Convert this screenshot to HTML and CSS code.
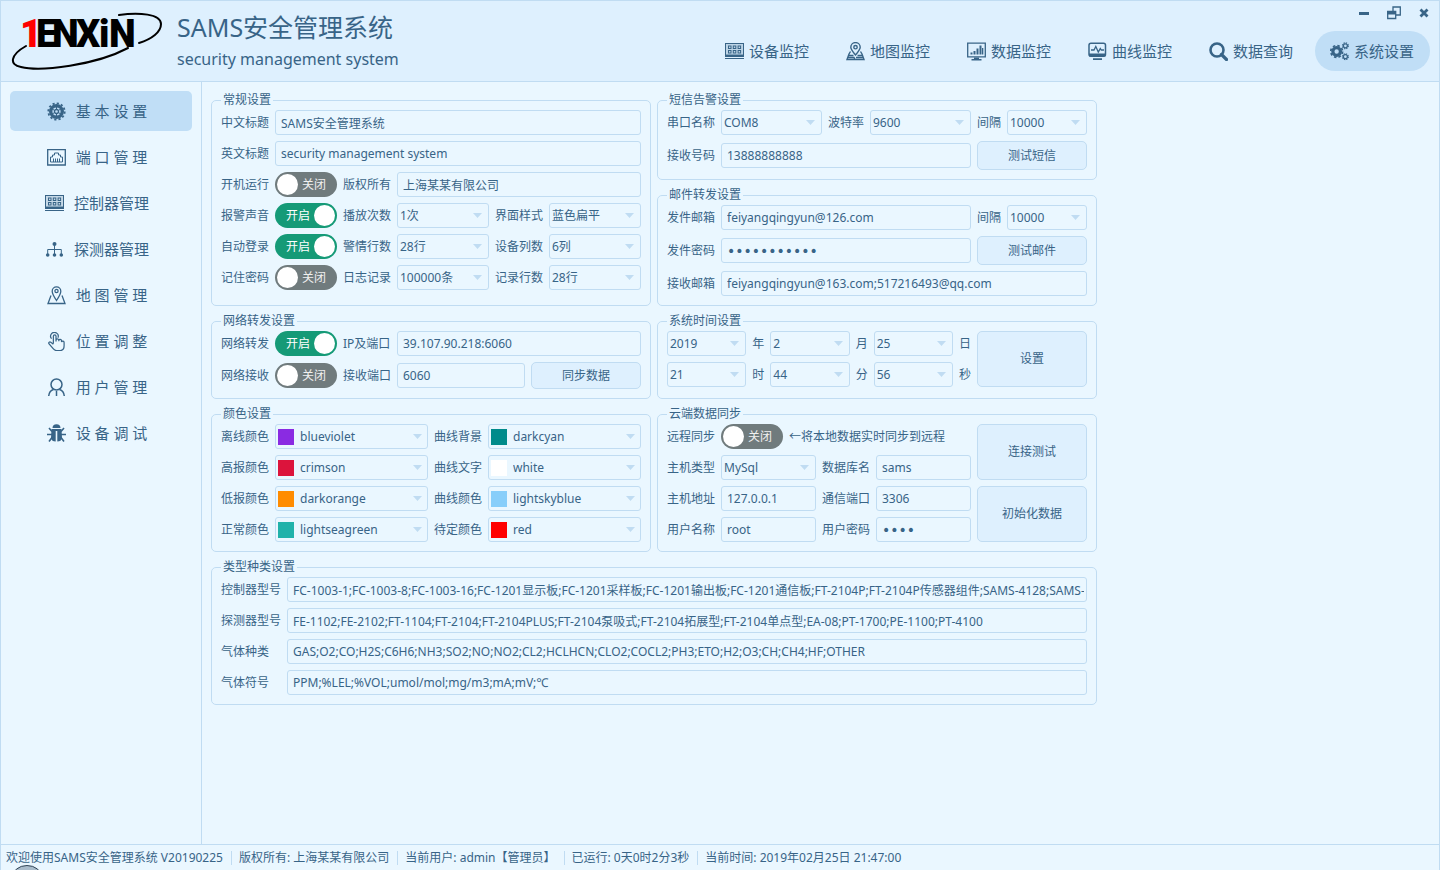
FILE: index.html
```html
<!DOCTYPE html>
<html lang="zh-CN">
<head>
<meta charset="utf-8">
<title>SAMS安全管理系统</title>
<link rel="stylesheet" href="styles.css">
</head>
<body>
<svg class="sprite" aria-hidden="true">
  <symbol id="i-panel" viewBox="0 0 19 17">
    <path fill-rule="evenodd" d="M0 0h19v14H0zM1 1v10.500h17V1zM3 2.500h3.500v3.500H3zM7.800 2.500h3.500v3.500H7.800zM12.600 2.500h3.500v3.500h-3.500zM3 7h3.500v3.500H3zM7.800 7h3.500v3.500H7.800zM12.600 7h3.500v3.500h-3.500zM4 3.500v1.500h1.500V3.500zM8.800 3.500v1.500h1.500V3.500zM13.600 3.500v1.500h1.500V3.500zM4 8v1.500h1.500V8zM8.800 8v1.500h1.500V8zM13.600 8v1.500h1.500V8z"/>
    <path opacity=".2" d="M1 1h17v10.500H1z"/><path d="M0 15h19v1H0z"/>
  </symbol>
  <symbol id="i-mapfold" viewBox="0 0 19 19">
    <g fill="none" stroke="currentColor" stroke-width="1.400"><path d="M9.500 13C6 9 4.800 7.500 4.800 5.300a4.700 4.700 0 0 1 9.400 0c0 2.200-1.200 3.700-4.700 7.700z"/><circle cx="9.500" cy="5.200" r="1.700"/><path d="M4.500 9.500L3 12l-2 5.500h17L16 12l-1.500-2.500M3 13.500h4.500M11.500 13.500H16M2 15.500h6l1 2M10 15.500h7"/></g>
  </symbol>
  <symbol id="i-bars" viewBox="0 0 19 18">
    <path fill="none" stroke="currentColor" stroke-width="1.300" d="M.7.7h17.600v13.600H.7z"/><path d="M3.500 10h2v2h-2zM6.500 8.500h2V12h-2zM9.500 6h2v6h-2zM12.500 3h2v9h-2zM15 5.500h1.300V12H15zM7 15h5v1.500h2.500V18h-10v-1.500H7z"/>
  </symbol>
  <symbol id="i-pulse" viewBox="0 0 19 18">
    <rect x="1" y=".8" width="16.500" height="13" rx="2" fill="none" stroke="currentColor" stroke-width="1.500"/><path d="M1 11h16.500v3H1zM5 15.800h9v1.600H5z"/><path fill="none" stroke="currentColor" stroke-width="1.300" d="M3 7.500h3L7.800 4l2.500 5.500 2-3.500 1 1.500H16"/>
  </symbol>
  <symbol id="i-search" viewBox="0 0 19 19">
    <circle cx="8" cy="8" r="6.500" fill="none" stroke="currentColor" stroke-width="2.600"/><path d="M12.500 12.500l5 5" stroke="currentColor" stroke-width="3.200" stroke-linecap="round"/>
  </symbol>
  <symbol id="i-gears" viewBox="0 0 20 20">
    <circle cx="7" cy="10" r="4" fill="none" stroke="currentColor" stroke-width="3.400"/><circle cx="7" cy="10" r="6.200" fill="none" stroke="currentColor" stroke-width="1.800" stroke-dasharray="2.600 2.270"/>
    <g fill="none" stroke="currentColor"><circle cx="16.200" cy="4" r="2.100" stroke-width="1.300"/><circle cx="16.200" cy="4" r="3.100" stroke-width="1.200" stroke-dasharray="1.400 1.040"/><circle cx="16.200" cy="15.500" r="2.100" stroke-width="1.300"/><circle cx="16.200" cy="15.500" r="3.100" stroke-width="1.200" stroke-dasharray="1.400 1.040"/></g>
  </symbol>
  <symbol id="i-gear" viewBox="0 0 19 19">
    <g fill="none" stroke="currentColor"><circle cx="9.500" cy="9.500" r="5.800" stroke-width="3.400"/><circle cx="9.500" cy="9.500" r="8.200" stroke-width="1.800" stroke-dasharray="2.200 2.090"/><circle cx="9.500" cy="9.500" r="2" stroke-width="1.300"/><path stroke-width="1" d="M9.500 4v3M9.500 12v3M4.700 6.700l2.700 1.600M11.600 10.700l2.700 1.600M4.700 12.300l2.700-1.600M11.600 8.300l2.700-1.600"/></g>
  </symbol>
  <symbol id="i-port" viewBox="0 0 19 17">
    <g fill="none" stroke="currentColor"><path stroke-width="1.300" d="M.7.7h17.600v15.300H.7z"/><path d="M3.500 13V8h2V6h2V4h4v2h2v2h2v5zM6.500 13V9.500M8.500 13V9.500M10.500 13V9.500M12.500 13V9.500"/></g>
  </symbol>
  <symbol id="i-tree" viewBox="0 0 19 17">
    <circle cx="9.500" cy="3" r="2"/><path fill="none" stroke="currentColor" d="M9.500 4v9M2.700 13V8.500h13.600V13"/><circle cx="2.700" cy="14" r="1.800"/><circle cx="9.500" cy="14" r="1.800"/><circle cx="16.300" cy="14" r="1.800"/>
  </symbol>
  <symbol id="i-map" viewBox="0 0 19 19">
    <g fill="none" stroke="currentColor" stroke-width="1.300"><path d="M9.500 14.500C6.500 10 5.200 7.500 5.200 5.200a4.300 4.300 0 0 1 8.600 0c0 2.300-1.300 4.800-4.300 9.300z"/><circle cx="9.500" cy="5" r="1.600"/><path d="M4 9.500L1 17.500h17l-3-8"/></g>
  </symbol>
  <symbol id="i-hand" viewBox="0 0 19 20">
    <g fill="none" stroke="currentColor" stroke-width="1.300"><path d="M6.200 12V4.500a1.400 1.400 0 0 1 2.800 0V10 8.300a1.500 1.500 0 0 1 2.900 0v1.500-1a1.500 1.500 0 0 1 2.900.3v1.400a1.400 1.400 0 0 1 2.700.5v3.500c0 3-1.500 5-4 5H9.500c-1.500 0-2.500-.8-3.500-2L1.500 12.300c-.6-1.500.8-2.300 2-1.500l2.700 2"/><path d="M4.300 7A4 4 0 1 1 11 6"/></g>
  </symbol>
  <symbol id="i-user" viewBox="0 0 19 19">
    <g fill="none" stroke="currentColor" stroke-width="1.500"><circle cx="9.500" cy="6.500" r="5.500"/><path d="M6.500 11.500C3.500 12.500 2 15 1.700 18M12.500 11.500c3 1 4.500 3.500 4.800 6.500M9.500 18v-5"/></g>
  </symbol>
  <symbol id="i-bug" viewBox="0 0 19 19">
    <path d="M5.500 4a4 3.800 0 0 1 8 0zM4.500 5h10l.5 9c-.5 2.500-2 3.500-4.700 3.500V7H8.700v10.500C6 17.500 4.500 16.500 4 14z"/><path fill="none" stroke="currentColor" stroke-width="1.600" d="M5 7.500L2 4M14 7.500L17 4M5 10.500H0M14 10.500h5M5 13.500L2 17.500M14 13.500l3 4"/>
  </symbol>
</svg>

<div class="window">
  <header class="header">
    <svg class="logo" viewBox="0 0 156 64" role="img" aria-label="1ENXiN">
      <g fill="none" stroke="#000" stroke-linecap="round">
        <path stroke-width="2" d="M112 9C132 6 154 8 154 18c0 8-9 15-22 19"/>
        <path stroke-width="2" d="M19 40C3 49 2 59 14 61c20 5 75-2 107-19"/>
      </g>
      <text x="13 29 45 69 92 102" y="41"><tspan class="logo-red">1</tspan>ENXiN</text>
    </svg>
    <div class="titles">
      <h1>SAMS安全管理系统</h1>
      <p>security management system</p>
    </div>
    <div class="header-right">
      <div class="winbtns">
        <button type="button" aria-label="最小化"><svg viewBox="0 0 14 14"><path d="M2 6h10v3H2z"/></svg></button>
        <button type="button" aria-label="还原"><svg viewBox="0 0 14 14"><path fill="none" stroke="currentColor" stroke-width="1.300" d="M6 5V1h7.300v8H9M.7 5.500h8v7h-8z"/><path d="M0 5h9v3.500H0z"/></svg></button>
        <button type="button" aria-label="关闭"><svg viewBox="0 0 14 14"><path fill="none" stroke="currentColor" stroke-width="2.800" d="M3.500 3.500l7 7M10.500 3.500l-7 7"/></svg></button>
      </div>
      <nav class="topnav">
        <button type="button"><svg><use href="#i-panel"/></svg>设备监控</button>
        <button type="button"><svg><use href="#i-mapfold"/></svg>地图监控</button>
        <button type="button"><svg><use href="#i-bars"/></svg>数据监控</button>
        <button type="button"><svg><use href="#i-pulse"/></svg>曲线监控</button>
        <button type="button"><svg><use href="#i-search"/></svg>数据查询</button>
        <button type="button" class="active"><svg><use href="#i-gears"/></svg>系统设置</button>
      </nav>
    </div>
  </header>

  <div class="body">
    <nav class="sidebar">
      <button type="button" class="active"><svg><use href="#i-gear"/></svg>基 本 设 置</button>
      <button type="button"><svg><use href="#i-port"/></svg>端 口 管 理</button>
      <button type="button"><svg><use href="#i-panel"/></svg>控制器管理</button>
      <button type="button"><svg><use href="#i-tree"/></svg>探测器管理</button>
      <button type="button"><svg><use href="#i-map"/></svg>地 图 管 理</button>
      <button type="button"><svg><use href="#i-hand"/></svg>位 置 调 整</button>
      <button type="button"><svg><use href="#i-user"/></svg>用 户 管 理</button>
      <button type="button"><svg><use href="#i-bug"/></svg>设 备 调 试</button>
    </nav>

    <main class="main">
      <form class="settings">
        <fieldset>
          <legend>常规设置</legend>
          <div class="grid g-general">
            <label for="titleCn">中文标题</label><input class="to-end" id="titleCn" type="text" value="SAMS安全管理系统">
            <label for="titleEn">英文标题</label><input class="to-end" id="titleEn" type="text" value="security management system">
            <label for="autoRun">开机运行</label><span class="switch"><input id="autoRun" type="checkbox"><span>关闭</span></span>
            <label for="copyright">版权所有</label><input class="to-end" id="copyright" type="text" value="上海某某有限公司">
            <label for="sound">报警声音</label><span class="switch"><input id="sound" type="checkbox" checked><span>开启</span></span>
            <label for="playCount">播放次数</label><select id="playCount"><option>1次</option></select>
            <label for="style">界面样式</label><select id="style"><option>蓝色扁平</option></select>
            <label for="autoLogin">自动登录</label><span class="switch"><input id="autoLogin" type="checkbox" checked><span>开启</span></span>
            <label for="alarmRows">警情行数</label><select id="alarmRows"><option>28行</option></select>
            <label for="devCols">设备列数</label><select id="devCols"><option>6列</option></select>
            <label for="savePwd">记住密码</label><span class="switch"><input id="savePwd" type="checkbox"><span>关闭</span></span>
            <label for="logRows">日志记录</label><select id="logRows"><option>100000条</option></select>
            <label for="recRows">记录行数</label><select id="recRows"><option>28行</option></select>
          </div>
        </fieldset>

        <div class="stack">
          <fieldset>
            <legend>短信告警设置</legend>
            <div class="grid g-message">
              <label for="com">串口名称</label><select id="com"><option>COM8</option></select>
              <label for="baud">波特率</label><select id="baud"><option>9600</option></select>
              <label for="smsGap">间隔</label><select id="smsGap"><option>10000</option></select>
              <label for="phone">接收号码</label><input class="span3" id="phone" type="text" value="13888888888">
              <button class="btn span2 h29" type="button">测试短信</button>
            </div>
          </fieldset>
          <fieldset>
            <legend>邮件转发设置</legend>
            <div class="grid g-message">
              <label for="mailFrom">发件邮箱</label><input class="span3" id="mailFrom" type="text" value="feiyangqingyun@126.com">
              <label for="mailGap">间隔</label><select id="mailGap"><option>10000</option></select>
              <label for="mailPwd">发件密码</label><input class="span3" id="mailPwd" type="password" value="12345678901">
              <button class="btn span2 h29" type="button">测试邮件</button>
              <label for="mailTo">接收邮箱</label><input class="to-end" id="mailTo" type="text" value="feiyangqingyun@163.com;517216493@qq.com">
            </div>
          </fieldset>
        </div>

        <fieldset>
          <legend>网络转发设置</legend>
          <div class="grid g-net">
            <label for="netSend">网络转发</label><span class="switch"><input id="netSend" type="checkbox" checked><span>开启</span></span>
            <label for="ip">IP及端口</label><input class="to-end" id="ip" type="text" value="39.107.90.218:6060">
            <label for="netRecv">网络接收</label><span class="switch"><input id="netRecv" type="checkbox"><span>关闭</span></span>
            <label for="recvPort">接收端口</label><input id="recvPort" type="text" value="6060">
            <button class="btn h27" type="button">同步数据</button>
          </div>
        </fieldset>

        <fieldset>
          <legend>系统时间设置</legend>
          <div class="grid g-time">
            <select id="year"><option>2019</option></select><label for="year">年</label>
            <select id="month"><option>2</option></select><label for="month">月</label>
            <select id="day"><option>25</option></select><label for="day">日</label>
            <button class="btn tall" type="button">设置</button>
            <select id="hour"><option>21</option></select><label for="hour">时</label>
            <select id="minute"><option>44</option></select><label for="minute">分</label>
            <select id="second"><option>56</option></select><label for="second">秒</label>
          </div>
        </fieldset>

        <fieldset>
          <legend>颜色设置</legend>
          <div class="grid g-color">
            <label for="c1">离线颜色</label><div class="color"><i style="background:blueviolet"></i><select id="c1"><option>blueviolet</option></select></div>
            <label for="c2">曲线背景</label><div class="color"><i style="background:darkcyan"></i><select id="c2"><option>darkcyan</option></select></div>
            <label for="c3">高报颜色</label><div class="color"><i style="background:crimson"></i><select id="c3"><option>crimson</option></select></div>
            <label for="c4">曲线文字</label><div class="color"><i style="background:white"></i><select id="c4"><option>white</option></select></div>
            <label for="c5">低报颜色</label><div class="color"><i style="background:darkorange"></i><select id="c5"><option>darkorange</option></select></div>
            <label for="c6">曲线颜色</label><div class="color"><i style="background:lightskyblue"></i><select id="c6"><option>lightskyblue</option></select></div>
            <label for="c7">正常颜色</label><div class="color"><i style="background:lightseagreen"></i><select id="c7"><option>lightseagreen</option></select></div>
            <label for="c8">待定颜色</label><div class="color"><i style="background:red"></i><select id="c8"><option>red</option></select></div>
          </div>
        </fieldset>

        <fieldset>
          <legend>云端数据同步</legend>
          <div class="grid g-cloud">
            <label for="cloud">远程同步</label>
            <div class="span3 inline"><span class="switch"><input id="cloud" type="checkbox"><span>关闭</span></span><span>←将本地数据实时同步到远程</span></div>
            <button class="btn tall" type="button">连接测试</button>
            <label for="dbType">主机类型</label><select id="dbType"><option>MySql</option></select>
            <label for="dbName">数据库名</label><input id="dbName" type="text" value="sams">
            <label for="dbHost">主机地址</label><input id="dbHost" type="text" value="127.0.0.1">
            <label for="dbPort">通信端口</label><input id="dbPort" type="text" value="3306">
            <button class="btn tall" type="button">初始化数据</button>
            <label for="dbUser">用户名称</label><input id="dbUser" type="text" value="root">
            <label for="dbPwd">用户密码</label><input id="dbPwd" type="password" value="root">
          </div>
        </fieldset>

        <fieldset class="wide">
          <legend>类型种类设置</legend>
          <div class="grid g-types">
            <label for="t1">控制器型号</label><input id="t1" type="text" value="FC-1003-1;FC-1003-8;FC-1003-16;FC-1201显示板;FC-1201采样板;FC-1201输出板;FC-1201通信板;FT-2104P;FT-2104P传感器组件;SAMS-4128;SAMS-4256">
            <label for="t2">探测器型号</label><input id="t2" type="text" value="FE-1102;FE-2102;FT-1104;FT-2104;FT-2104PLUS;FT-2104泵吸式;FT-2104拓展型;FT-2104单点型;EA-08;PT-1700;PE-1100;PT-4100">
            <label for="t3">气体种类</label><input id="t3" type="text" value="GAS;O2;CO;H2S;C6H6;NH3;SO2;NO;NO2;CL2;HCLHCN;CLO2;COCL2;PH3;ETO;H2;O3;CH;CH4;HF;OTHER">
            <label for="t4">气体符号</label><input id="t4" type="text" value="PPM;%LEL;%VOL;umol/mol;mg/m3;mA;mV;℃">
          </div>
        </fieldset>
      </form>
    </main>
  </div>

  <footer class="footer">
    <span>欢迎使用SAMS安全管理系统 V20190225</span>
    <span>版权所有: 上海某某有限公司</span>
    <span>当前用户: admin【管理员】</span>
    <span>已运行: 0天0时2分3秒</span>
    <span>当前时间: 2019年02月25日 21:47:00</span>
    <svg class="orb" viewBox="0 0 26 5" aria-hidden="true"><ellipse cx="13" cy="13" rx="15" ry="12.500" fill="#a9bccb" stroke="#2f4355"/></svg>
  </footer>
</div>
</body>
</html>
```
FILE: styles.css
```css
:root {
  --text: #386487;
  --panel: #eaf7ff;
  --border: #c0dcf2;
  --normal: #def0fe;
  --active: #c0def6;
}
* { box-sizing: border-box; }
body {
  margin: 0;
  background: var(--panel);
  color: var(--text);
  font: 12px/16px "Noto Sans", "Noto Sans CJK SC", sans-serif;
}
button, input, select { font: inherit; color: inherit; margin: 0; }
svg { fill: currentColor; }
.sprite { display: none; }
.window {
  display: flex;
  flex-direction: column;
  height: 100vh;
  border: 1px solid var(--border);
  border-bottom: 0;
}

/* header */
.header {
  display: flex;
  height: 81px;
  flex: none;
  background: var(--normal);
  border-bottom: 1px solid var(--border);
}
.logo { width: 156px; height: 64px; margin: 5px 14px 0 6px; }
.logo text { font: 900 38px Roboto, sans-serif; fill: #000; }
.logo .logo-red { fill: #f00; }
.titles { padding-top: 8px; white-space: nowrap; }
.titles h1 { margin: 0; font-size: 25px; line-height: 36px; font-weight: 400; }
.titles p { margin: 0; font-size: 16px; line-height: 28px; }
.header-right { margin-left: auto; display: flex; flex-direction: column; align-items: flex-end; }
.winbtns { display: flex; }
.winbtns button { width: 30px; height: 24px; padding: 0; border: 0; background: none; display: grid; place-items: center; }
.winbtns svg { width: 14px; height: 14px; }
.topnav { display: flex; gap: 6px; padding: 6px 9px 0 0; }
.topnav button {
  display: flex; align-items: center; gap: 5px;
  height: 40px; padding: 0 16px 0 15px;
  border: 0; border-radius: 20px; background: none;
  font-size: 15px; white-space: nowrap;
}
.topnav svg, .sidebar svg { width: 19px; height: 19px; flex: none; }
.topnav .active, .sidebar .active { background: var(--active); }

/* body */
.body { display: flex; flex: 1; min-height: 0; }
.sidebar {
  display: flex; flex-direction: column; gap: 6px;
  flex: none; width: 201px; padding: 9px;
  border-right: 1px solid var(--border);
}
.sidebar button {
  display: flex; align-items: center; justify-content: center; gap: 10px;
  height: 40px; padding: 0 8px 0 0;
  border: 0; border-radius: 5px; background: none;
  font-size: 15px;
}
.main { flex: 1; min-width: 0; padding: 10px 9px; overflow: auto; }
.settings {
  display: grid; grid-template-columns: 1fr 1fr; gap: 7px 6px;
  max-width: 886px;
}
.stack { display: grid; gap: 7px; }
fieldset {
  min-width: 0; margin: 0; padding: 2px 9px 9px;
  border: 1px solid var(--border); border-radius: 5px;
}
legend { padding: 0 2px; }
.wide { grid-column: 1 / -1; }

.grid { display: grid; gap: 6px; align-items: center; white-space: nowrap; }
.g-general { grid-template-columns: 48px 62px 48px 1fr 48px 1fr; }
.g-message { grid-template-columns: 48px 1fr 36px 1fr 24px 80px; }
.g-net { grid-template-columns: 48px 62px 48px 1fr 110px; }
.g-time { grid-template-columns: 1fr 12px 1fr 12px 1fr 12px 110px; }
.g-color { grid-template-columns: 48px 1fr 48px 1fr; }
.g-cloud { grid-template-columns: 48px 1fr 48px 1fr 110px; }
.g-types { grid-template-columns: 60px 1fr; }
.to-end { grid-column-end: -1; }
.g-general .to-end, .g-message .to-end { grid-column-start: 2; }
.g-general .switch + label + .to-end, .g-net .to-end { grid-column-start: 4; }
.span2 { grid-column-end: span 2; }
.span3 { grid-column-end: span 3; }
.inline { display: flex; align-items: center; gap: 6px; }

.grid input[type=text], .grid input[type=password], .grid select, .color {
  width: 100%; min-width: 0; height: 25px;
  border: 1px solid var(--border); border-radius: 3px;
  background-color: transparent; outline: 0;
}
.grid input[type=text], .grid input[type=password] { padding: 0 2px 0 5px; }
.grid input[type=password] { font-family: "DejaVu Sans", sans-serif; font-size: 14px; }
.grid select {
  appearance: none; padding: 0 20px 0 2px;
  background: url("data:image/svg+xml,%3Csvg xmlns='http://www.w3.org/2000/svg' width='9' height='5'%3E%3Cpath d='M0 0h9L4.500 5z' fill='%23c0dcf2'/%3E%3C/svg%3E") no-repeat right 6px center;
}
.color { display: flex; align-items: center; padding-left: 2px; }
.color i { width: 16px; height: 16px; flex: none; }
.grid .color select { border: 0; height: 23px; padding-left: 6px; background-position: right 5px center; }

.btn {
  height: 25px; padding: 0;
  background: var(--normal);
  border: 1px solid var(--border); border-radius: 5px;
}
.h27 { height: 27px; }
.h29 { height: 29px; }
.tall { height: 56px; grid-column: -2 / -1; grid-row-end: span 2; }

.switch {
  display: flex; align-items: center; gap: 4px;
  width: 62px; height: 25px; padding: 0 2px;
  border-radius: 13px; background: #707b7d; color: #f0f0f0;
}
.switch input { appearance: none; width: 21px; height: 21px; flex: none; border-radius: 50%; background: #fff; }
.switch:has(:checked) { flex-direction: row-reverse; background: #159a77; color: #fff; }

/* status bar */
.footer {
  position: relative; display: flex; align-items: center;
  flex: none; height: 26px; padding: 0 5px;
  border-top: 1px solid var(--border); white-space: nowrap;
}
.footer span + span { margin-left: 8px; padding-left: 7px; border-left: 1px solid var(--border); line-height: 14px; }
.orb { position: absolute; left: 13px; bottom: 0; width: 26px; height: 5px; }
```
